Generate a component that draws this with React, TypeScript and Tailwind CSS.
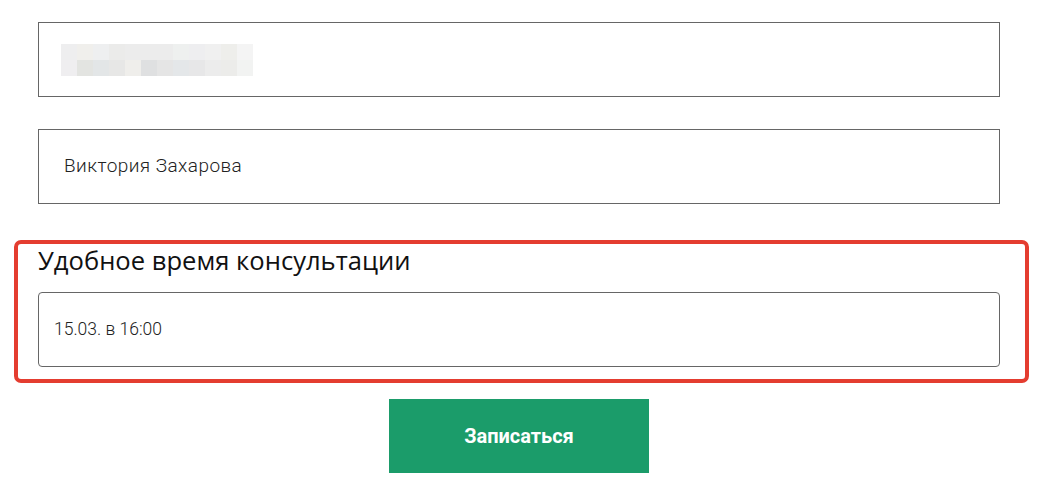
const BLUR_ROWS: string[][] = [
  ["#eeeeef", "#f0efec", "#eeeff0", "#ebebea", "#ececec", "#ececec", "#ececec", "#eef0ef", "#eeeef0", "#f0f0f0", "#eeeeeb", "#f4f4f4"],
  ["#efeef0", "#e3e4e1", "#e3e6e7", "#e7e7e6", "#efeeeb", "#dfe0e1", "#e5e5e5", "#e4e7e9", "#e7e7e8", "#ececec", "#ececea", "#f2f3f2"],
];

function BlurredValue() {
  return (
    <div className="flex flex-col">
      {BLUR_ROWS.map((row, i) => (
        <div key={i} className="flex">
          {row.map((c, j) => (
            <div key={j} className="h-4 w-4" style={{ backgroundColor: c }} />
          ))}
        </div>
      ))}
    </div>
  );
}

export default function App() {
  return (
    <div className="min-h-[493px] w-full bg-white font-['Roboto',sans-serif]">
      <div className="ml-[38px] flex w-[962px] flex-col pt-[22px]">
        <div className="flex h-[75px] items-center border border-[#666666] pl-[22px]">
          <BlurredValue />
        </div>

        <div className="mt-8 flex h-[75px] items-center border border-[#666666] pl-[25px]">
          <span className="text-[19px] font-light tracking-[0.45px] text-[#222222]">Виктория Захарова</span>
        </div>

        <div className="relative mt-[41px]">
          <div className="pointer-events-none absolute -top-[5px] -bottom-4 -left-6 -right-[29px] rounded-[7px] border-4 border-[#e43d30]" />
          <label className="block font-['Open_Sans',sans-serif] text-[25.6px] leading-8 text-[#111111]">
            Удобное время консультации
          </label>
          <div className="mt-[15px] flex h-[75px] items-center rounded-[4px] border border-[#666666] pl-[15px]">
            <span className="text-[17.5px] font-light text-[#222222]">15.03. в 16:00</span>
          </div>
        </div>

        <button
          type="button"
          className="mx-auto mt-8 flex h-[74px] w-[260px] items-center justify-center bg-[#1b9c6a] text-[20px] font-bold text-white"
        >
          Записаться
        </button>
      </div>
    </div>
  );
}
